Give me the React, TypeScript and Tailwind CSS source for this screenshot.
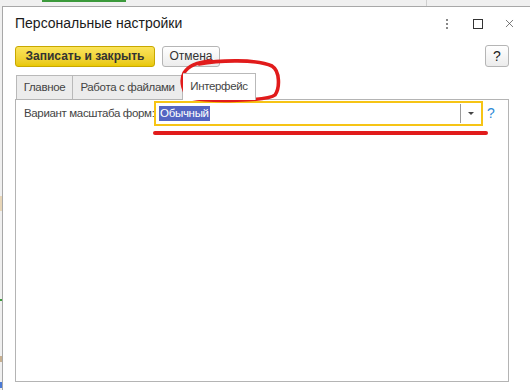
import { X } from "lucide-react";

function TitleBar() {
  return (
    <div className="flex h-[33px] items-center pl-[12px] pr-[14px]">
      <span className="flex-1 text-[14px] text-[#1a1a1a]">Персональные настройки</span>
      <div className="flex items-center">
        <div className="flex flex-col gap-[2px]">
          <span className="h-[2px] w-[2px] bg-[#888]" />
          <span className="h-[2px] w-[2px] bg-[#888]" />
          <span className="h-[2px] w-[2px] bg-[#888]" />
        </div>
        <span className="ml-[25px] h-[10px] w-[10px] border border-[#333]" />
        <X className="ml-[20px] h-[13px] w-[13px] text-[#444]" strokeWidth={1.3} />
      </div>
    </div>
  );
}

function Toolbar() {
  return (
    <div className="mt-[5px] flex items-center pl-[12px] pr-[21px]">
      <button className="h-[21px] w-[140px] rounded-[3px] border border-[#c8a800] bg-gradient-to-b from-[#fbe45a] to-[#e9c800] text-[12px] font-bold text-[#333]">
        Записать и закрыть
      </button>
      <button className="ml-[7px] h-[21px] w-[58px] rounded-[3px] border border-[#b5b5b5] bg-gradient-to-b from-white to-[#ececec] text-[12px] text-[#333]">
        Отмена
      </button>
      <div className="flex-1" />
      <button className="h-[22px] w-[24px] rounded-[3px] border border-[#b5b5b5] bg-gradient-to-b from-white to-[#ececec] text-[14px] text-[#222]">
        ?
      </button>
    </div>
  );
}

function Tabs() {
  return (
    <div className="mt-[6px] flex items-end pl-[13px] text-[11.5px] tracking-[-0.35px] text-[#444]">
      <div className="flex h-[24px] w-[57px] items-center justify-center whitespace-nowrap border border-b-0 border-[#b9b9b9] bg-[#ececec]">
        Главное
      </div>
      <div className="flex h-[24px] w-[110px] items-center justify-center whitespace-nowrap border border-b-0 border-l-0 border-[#b9b9b9] bg-[#ececec]">
        Работа с файлами
      </div>
      <div className="relative z-10 -mb-px flex h-[27px] w-[73px] items-center justify-center whitespace-nowrap border border-b-0 border-l-0 border-[#b9b9b9] bg-white">
        Интерфейс
      </div>
    </div>
  );
}

function Panel() {
  return (
    <div className="ml-[12px] mr-[21px] h-[283px] border border-[#b4b4b4] bg-white pt-[1px]">
      <div className="flex items-center">
        <span className="ml-[8px] w-[130px] shrink-0 whitespace-nowrap text-[11.5px] tracking-[-0.35px] text-[#444]">
          Вариант масштаба форм:
        </span>
        <div className="flex h-[25px] w-[329px] items-center border-2 border-[#f6c415] pl-[3px]">
          <span className="bg-[#5465c2] px-[1px] text-[11.5px] leading-[15px] tracking-[-0.3px] text-white">Обычный</span>
          <div className="flex-1" />
          <span className="h-[19px] w-px bg-[#9a9a9a]" />
          <span className="mx-[7px] h-0 w-0 border-x-[3px] border-t-[3px] border-x-transparent border-t-[#444]" />
        </div>
        <span className="ml-[4px] text-[14px] text-[#2f8ad6]">?</span>
      </div>
      <div className="ml-[137px] mt-[5px] h-[4px] w-[335px] rounded-full bg-[#e11b1b]" />
    </div>
  );
}

export default function App() {
  return (
    <div
      className="relative h-[390px] w-[530px] overflow-hidden bg-[#f0f0f0]"
      style={{ fontFamily: '"Liberation Sans", Arial, sans-serif' }}
    >
      <div className="flex h-[6px]">
        <div className="ml-[42px] h-[2px] w-[84px] bg-[#3c9a3c]" />
        <div className="ml-[300px] h-[6px] w-px bg-[#cfcfcf]" />
      </div>
      <div className="flex">
        <div className="w-[2px]">
          <div className="mt-[190px] h-[15px] w-[2px] bg-[#e8d6b8]" />
          <div className="mt-[88px] h-[2px] w-[2px] bg-[#3c9a3c]" />
          <div className="mt-[55px] h-[6px] w-[2px] bg-[#c8b090]" />
          <div className="mt-[20px] h-[6px] w-[2px] bg-[#4a7ad6]" />
        </div>
        <div className="h-[400px] flex-1 border-l border-t border-[#a8a8a8] bg-white">
          <TitleBar />
          <Toolbar />
          <Tabs />
          <Panel />
        </div>
      </div>
      <svg
        className="pointer-events-none absolute left-[175px] top-[56px]"
        width="110"
        height="48"
        viewBox="0 0 110 48"
        fill="none"
      >
        <path
          d="M24 8 C 44 4, 82 3, 97 10 C 105 15, 105 32, 100 39 C 93 45, 34 46, 16 42 C 8 38, 5 25, 9 17 C 13 10, 22 6, 36 5"
          stroke="#e11b1b"
          strokeWidth="3.6"
          strokeLinecap="round"
        />
      </svg>
    </div>
  );
}
